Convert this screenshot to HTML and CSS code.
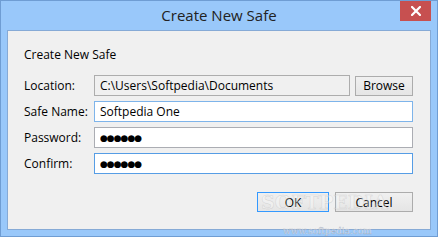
FILE: index.html
```html
<!DOCTYPE html>
<html lang="en">
<head>
    <meta charset="UTF-8">
    <title>Create New Safe</title>
    <link rel="stylesheet" href="styles.css">
</head>
<body>
    <div class="window">
        <div class="titlebar">
            <span></span>
            <h1>Create New Safe</h1>
            <button class="close" title="Close">
                <svg width="10" height="10" viewBox="0 0 10 10">
                    <path d="M1 1 L9 9 M9 1 L1 9" stroke="#fff" stroke-width="2.2" stroke-linecap="square"/>
                </svg>
            </button>
        </div>

        <div class="client">
            <h2>Create New Safe</h2>

            <div class="form">
                <label>Location:</label>
                <div class="path-row">
                    <input type="text" class="readonly" value="C:\Users\Softpedia\Documents" readonly>
                    <button class="btn">Browse</button>
                </div>

                <label>Safe Name:</label>
                <input type="text" class="hover" value="Softpedia One">

                <label>Password:</label>
                <input type="text" class="dots" value="●●●●●●">

                <label>Confirm:</label>
                <input type="text" class="dots focus" value="●●●●●●">
            </div>

            <div class="actions">
                <button class="btn ok">OK</button>
                <button class="btn cancel">Cancel</button>
            </div>
        </div>

        <div class="watermark">SOFTPEDIA</div>
        <div class="watermark-url">www.softpedia.com</div>
    </div>
</body>
</html>
```

FILE: styles.css
```css
body {
    margin: 0;
    background: #fff;
    font-family: "Open Sans", "Noto Sans", Arial, sans-serif;
    font-size: 12px;
    color: #000;
}
.window {
    position: relative;
    width: 438px;
    height: 237px;
    box-sizing: border-box;
    background: #99c8fa;
    border: 1px solid #6f9dd3;
    padding: 0 6px 6px 6px;
}
.titlebar {
    display: grid;
    grid-template-columns: 1fr auto 1fr;
    align-items: start;
    height: 29px;
}
.titlebar h1 {
    margin: 0;
    font-size: 15px;
    font-weight: normal;
    line-height: 29px;
    color: #222;
}
.close {
    justify-self: end;
    width: 31px;
    height: 20px;
    border: none;
    padding: 0;
    background: #c75050;
    display: flex;
    align-items: center;
    justify-content: center;
}
.client {
    height: 200px;
    box-sizing: border-box;
    background: #f0f0f0;
    border: 1px solid #86aad6;
    padding: 16px 17px 0 16px;
}
.client h2 {
    margin: 0 0 12px 0;
    font-size: 12px;
    font-weight: normal;
    line-height: 16px;
}
.form {
    display: grid;
    grid-template-columns: 70px 1fr;
    row-gap: 5px;
    align-items: center;
}
.path-row {
    display: flex;
    gap: 5px;
    align-items: center;
}
.path-row input {
    flex: 1;
}
input {
    height: 21px;
    box-sizing: border-box;
    border: 1px solid #abadb3;
    background: #fff;
    padding: 0 5px;
    font-family: inherit;
    font-size: 12px;
    color: #000;
    outline: none;
    min-width: 0;
}
input.readonly {
    background: #f0f0f0;
    border-color: #adadad;
}
input.hover {
    border-color: #7eb4ea;
}
input.focus {
    border-color: #569de5;
}
input.dots {
    font-family: "DejaVu Sans", sans-serif;
    font-size: 9px;
    letter-spacing: -1px;
    font-weight: bold;
}
.btn {
    height: 20px;
    box-sizing: border-box;
    border: 1px solid #acacac;
    background: linear-gradient(#f0f0f0, #e5e5e5);
    font-family: inherit;
    font-size: 12px;
    color: #000;
    padding: 0;
}
.path-row .btn {
    width: 58px;
}
.actions {
    display: flex;
    justify-content: flex-end;
    gap: 6px;
    margin-top: 18px;
}
.ok {
    width: 72px;
    border-color: #3399ff;
}
.cancel {
    width: 78px;
}
.watermark {
    position: absolute;
    left: 260px;
    top: 190px;
    font-family: "DejaVu Serif", serif;
    font-size: 19px;
    font-weight: bold;
    line-height: 22px;
    color: rgba(255, 255, 255, 0.3);
    -webkit-text-stroke: 0.5px rgba(170, 170, 170, 0.4);
    pointer-events: none;
}
.watermark-url {
    position: absolute;
    left: 282px;
    top: 225px;
    font-family: "DejaVu Serif", serif;
    font-size: 9px;
    line-height: 11px;
    color: rgba(230, 235, 245, 0.9);
    -webkit-text-stroke: 0.3px rgba(140, 150, 170, 0.6);
    pointer-events: none;
}
```
